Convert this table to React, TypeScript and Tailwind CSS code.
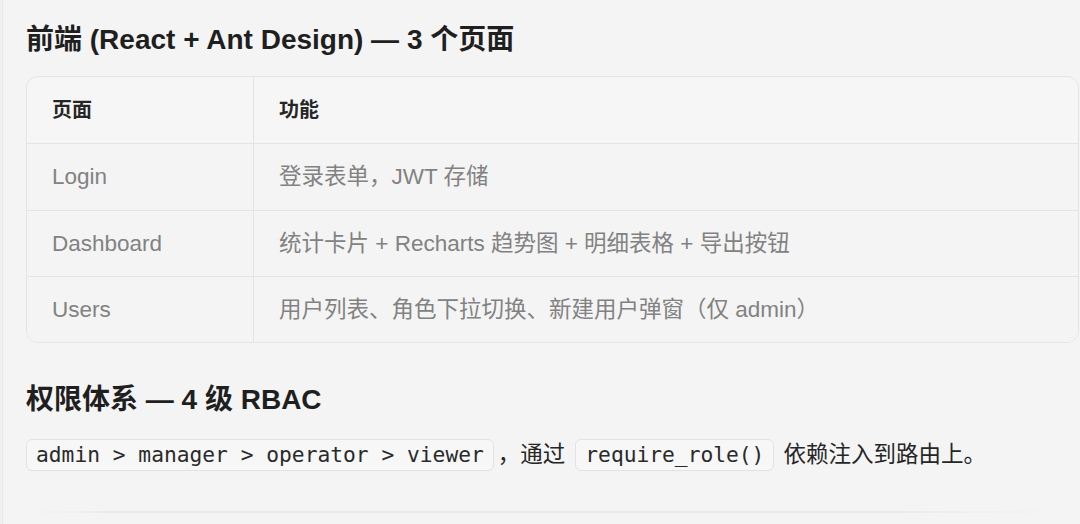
export default function App() {
  const rows: [string, string, string][] = [
    ["Login", "登录表单，JWT 存储", "h-[67px]"],
    ["Dashboard", "统计卡片 + Recharts 趋势图 + 明细表格 + 导出按钮", "h-[66px]"],
    ["Users", "用户列表、角色下拉切换、新建用户弹窗（仅 admin）", "h-[65px]"],
  ];
  const sans = "font-['Liberation_Sans','Noto_Sans_CJK_SC',sans-serif]";
  const code =
    "h-[32px] flex items-center px-[9px] rounded-[6px] border border-[#e2e2e2] bg-[#f7f7f7] font-['DejaVu_Sans_Mono',monospace] text-[21.25px] text-[#2a2a2a]";
  return (
    <div className={`w-[1080px] h-[524px] overflow-hidden bg-[#f4f4f4] flex ${sans}`}>
      <div className="w-[3px] bg-[#f0f0f0] border-r border-[#e9e9e9]" />
      <div className="flex-1 pl-[23px] pr-px flex flex-col">
        <h2 className="mt-[23px] text-[28px] leading-[34px] font-bold text-[#1f1f1f] whitespace-nowrap">
          前端 (React + Ant Design) — 3 个页面
        </h2>
        <div className="mt-[19px] border border-[#e4e4e4] rounded-[12px] overflow-hidden bg-[#f6f6f6]">
          <div className="grid grid-cols-[227px_1fr] h-[67px] border-b border-[#e4e4e4]">
            <div className="flex items-center pl-[25px] border-r border-[#e4e4e4] text-[20px] font-bold text-[#262626]">页面</div>
            <div className="flex items-center pl-[25px] text-[20px] font-bold text-[#262626]">功能</div>
          </div>
          {rows.map(([a, b, h], i) => (
            <div
              key={a}
              className={`grid grid-cols-[227px_1fr] ${h} bg-[#f4f4f4] ${i < rows.length - 1 ? "border-b border-[#e4e4e4]" : ""}`}
            >
              <div className="flex items-center pl-[25px] border-r border-[#e4e4e4] text-[22.5px] text-[#828282]">{a}</div>
              <div className="flex items-center pl-[25px] text-[22.5px] text-[#828282] whitespace-nowrap">{b}</div>
            </div>
          ))}
        </div>
        <h2 className="mt-[40px] text-[28px] leading-[34px] font-bold text-[#1f1f1f] whitespace-nowrap">
          权限体系 — 4 级 RBAC
        </h2>
        <div className="mt-[22px] flex items-center h-[32px] text-[22.5px] text-[#262626] whitespace-nowrap">
          <code className={code}>admin &gt; manager &gt; operator &gt; viewer</code>
          <span className="ml-[4px]">，通过</span>
          <code className={`ml-[10px] ${code}`}>require_role()</code>
          <span className="ml-[9px]">依赖注入到路由上。</span>
        </div>
        <div className="mt-[40px] h-[2px] w-[1040px] bg-[linear-gradient(to_right,transparent,#e9e9e9_10%,#e9e9e9_80%,transparent)]" />
      </div>
    </div>
  );
}
